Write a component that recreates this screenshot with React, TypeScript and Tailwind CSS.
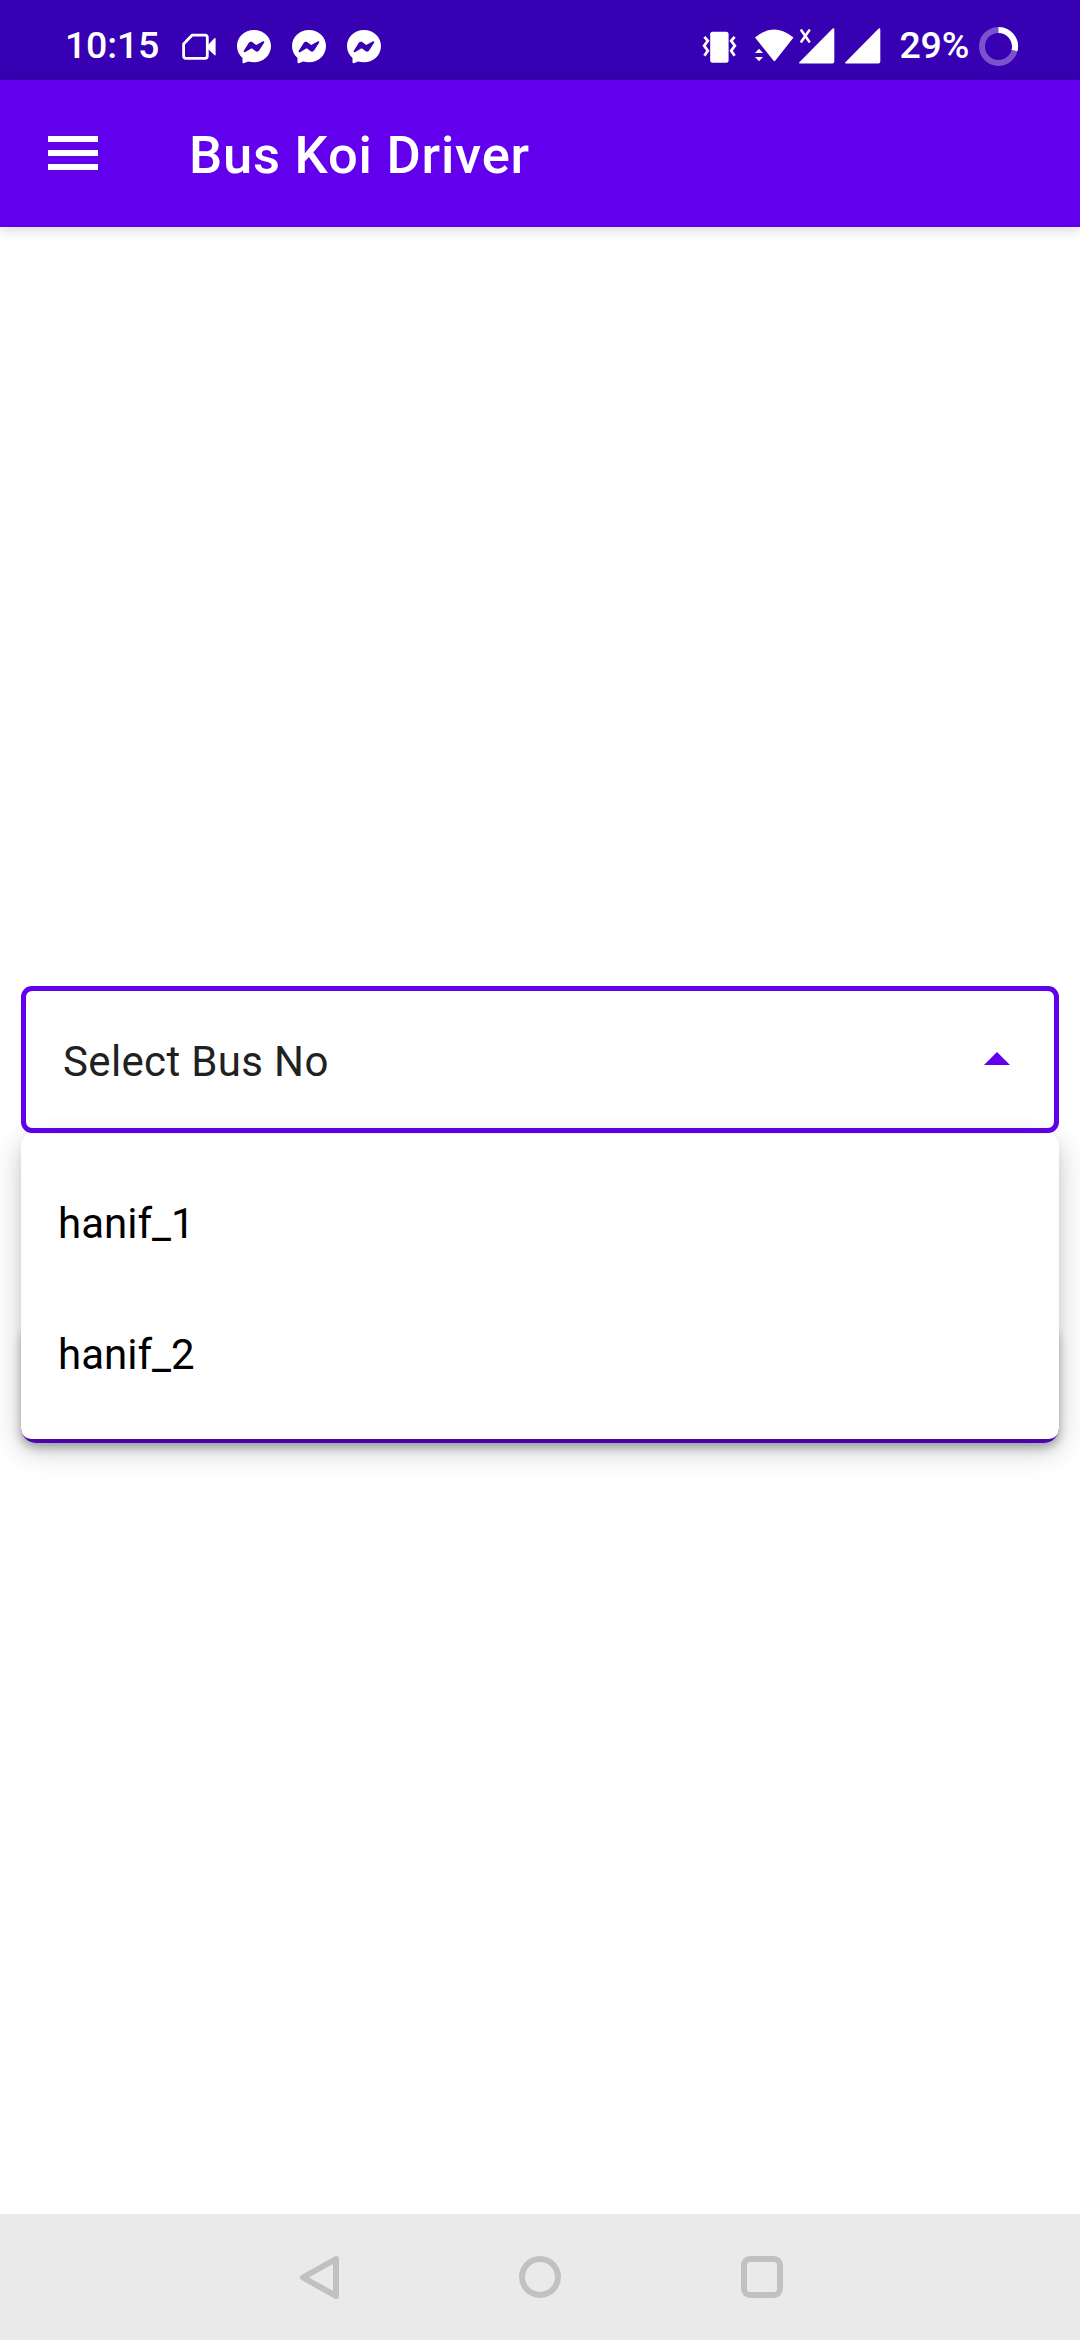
const Messenger = () => (
  <svg className="h-[34px] w-[34px]" viewBox="0 0 34 34">
    <path
      fill="#fff"
      d="M17 0C7.300 0 0 7 0 16.100c0 4.900 2.100 9 5.500 11.900V32.300c0 .8.6 1.200 1.300.9l4.400-1.700c1.800.5 3.800.8 5.800.8 9.700 0 17-7.100 17-16.200S26.700 0 17 0Z"
    />
    <path
      fill="#3700b3"
      d="M6.800 20.700l5-7.900c.8-1.200 2.300-1.500 3.400-.7l4 3 6.400-3.700c1.100-.6 2.200.3 1.500 1.400l-5 7.700c-.8 1.200-2.300 1.500-3.400.7l-4-3-6.400 3.900c-1.100.6-2.200-.4-1.500-1.400Z"
    />
  </svg>
);

const Camera = () => (
  <svg className="h-[34px] w-[34px]" viewBox="0 0 34 34" fill="none">
    <path
      d="M10 5.200H23Q25.300 5.200 25.300 7.500V26Q25.300 28.300 23 28.300H3.900Q1.600 28.300 1.600 26V14Z"
      stroke="#fff"
      strokeWidth="2.800"
      strokeLinejoin="round"
    />
    <path d="M26 15L32.300 8.300Q33.600 7.300 33.600 9V24.500Q33.600 26 32.300 25L26 19Z" fill="#fff" />
  </svg>
);

const Signal = () => (
  <svg className="h-[36px] w-[36px]" viewBox="0 0 36 36">
    <path fill="#fff" d="M.7 35.600Q-.4 35.300.4 34.300L33.400.8Q35.300-.6 35.300 1.500V33.500Q35.300 35.600 33.300 35.600Z" />
  </svg>
);

const StatusBar = () => (
  <header className="flex h-20 items-center bg-[#3700b3] pt-3 text-white">
    <span className="ml-[65px] w-[117px] pb-[2px] text-[37.500px] leading-[44px] font-medium tracking-[-0.200px]">10:15</span>
    <div className="flex gap-[21px] pt-[2px]">
      <Camera />
      <Messenger />
      <Messenger />
      <Messenger />
    </div>
    <svg className="ml-[321px] h-[36px] w-[36px]" viewBox="0 0 36 36" fill="none">
      <rect x="8.200" y="3.700" width="18.400" height="31" rx="2.500" fill="#fff" />
      <path
        d="M2.400 8.800L5.800 12.800L2.200 17.800L5.800 22.800L2.400 27.800M32.600 8.800L29.200 12.800L32.800 17.800L29.200 22.800L32.600 27.800"
        stroke="#fff"
        strokeWidth="2.800"
      />
    </svg>
    <svg className="ml-[16px] h-[36px] w-[40px]" viewBox="0 0 40 36" fill="#fff">
      <path d="M1 9.500Q19.700-6.500 39.500 9.500L21.400 32.500Q20.400 33.800 19.400 32.500Z" />
      <path d="M1 25L5 20.800L9 25ZM1 29H9L5 33.300Z" />
    </svg>
    <div className="relative ml-[5px] h-[36px] w-[36px]">
      <Signal />
      <svg className="absolute top-[1px] left-0 h-[14px] w-[13px]" viewBox="0 0 13 14">
        <path d="M1.800 .5L10.800 13.500M10.800 .5L1.800 13.500" stroke="#fff" strokeWidth="2.500" />
      </svg>
    </div>
    <div className="ml-[10px]">
      <Signal />
    </div>
    <span className="ml-[18.500px] w-[79.500px] pb-[2px] text-[37.500px] leading-[44px] font-medium tracking-[-0.200px]">29%</span>
    <svg className="h-[40px] w-[40px]" viewBox="0 0 40 40" fill="none" strokeWidth="6">
      <circle cx="19.500" cy="20.400" r="16.500" stroke="#7b52cd" />
      <path d="M19.500 3.900A16.500 16.500 0 0 1 35.500 24.600" stroke="#fff" />
    </svg>
  </header>
);

const AppBar = () => (
  <div className="flex h-[147px] items-center bg-[#6200ee] shadow-[0_3px_12px_rgba(0,0,0,0.16)]">
    <div className="ml-12 flex w-[141px] flex-col gap-[8.500px] pb-[1.500px]">
      <span className="h-[5.500px] w-[50px] bg-white" />
      <span className="h-[5.500px] w-[50px] bg-white" />
      <span className="h-[5.500px] w-[50px] bg-white" />
    </div>
    <h1 className="pt-[2px] text-[52.500px] leading-[62px] font-medium tracking-[0.800px] text-white">Bus Koi Driver</h1>
  </div>
);

const buses = ["hanif_1", "hanif_2"];

const BusPicker = () => (
  <div className="relative">
    <div className="flex h-[147px] items-center justify-between rounded-[11px] border-[5px] border-[#6200ee] pr-[44px] pl-[37px]">
      <span className="pt-[5px] text-[42px] leading-[50px] tracking-[0.350px] text-[#212121]">Select Bus No</span>
      <svg className="mb-[2px] h-[13px] w-[26px]" viewBox="0 0 26 13">
        <path d="M0 13L13 0L26 13Z" fill="#6200ee" />
      </svg>
    </div>
    <ul className="absolute top-[148px] left-0 z-10 h-[305px] w-full rounded-[10px] bg-white pt-[24px] shadow-[0_10px_30px_rgba(0,0,0,0.22),0_3px_8px_rgba(0,0,0,0.06)]">
      {buses.map((bus) => (
        <li key={bus} className="flex h-[131px] items-center pl-[37px] text-[42px] text-black">
          {bus}
        </li>
      ))}
    </ul>
  </div>
);

export default function App() {
  return (
    <div className="flex h-[2340px] w-[1080px] flex-col overflow-hidden bg-white font-['Roboto',sans-serif]">
      <StatusBar />
      <AppBar />
      <main className="flex-1 px-[21px] pt-[759px]">
        <BusPicker />
        <button
          aria-label="Select"
          className="mt-[189px] block h-[121px] w-full rounded-[15px] bg-[#5a05d0] shadow-[0_5px_10px_rgba(0,0,0,0.25)]"
        />
      </main>
      <nav className="flex h-[126px] items-center bg-[#eaeaea]">
        <svg className="ml-[299px] h-[44px] w-[44px]" viewBox="0 0 44 44" fill="none">
          <path d="M37 4L4 22.500L37 41Z" stroke="#c1c1c1" strokeWidth="6" strokeLinejoin="round" />
        </svg>
        <div className="ml-[176px] h-[42px] w-[42px] rounded-full border-[6px] border-[#c1c1c1]" />
        <div className="ml-[180px] h-[42px] w-[42px] rounded-[9px] border-[6px] border-[#c1c1c1]" />
      </nav>
    </div>
  );
}
